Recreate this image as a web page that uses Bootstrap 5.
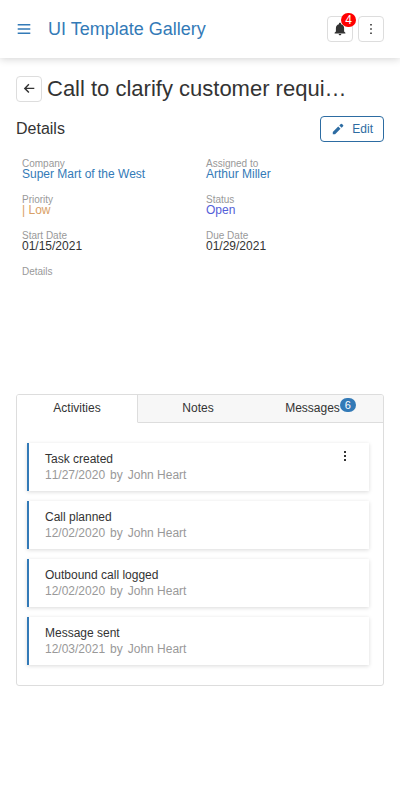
<!DOCTYPE html>
<html lang="en">
<head>
<meta charset="utf-8">
<meta name="viewport" content="width=device-width, initial-scale=1">
<title>UI Template Gallery</title>
<link href="https://cdn.jsdelivr.net/npm/bootstrap@5.3.0/dist/css/bootstrap.min.css" rel="stylesheet">
<style>
:root { --brand: #337ab7; --ink: #333; --muted: #999; --line: #ddd; }
body { font-family: "Liberation Sans", Arial, sans-serif; font-size: 12px; line-height: 16px; color: var(--ink); }
svg { display: block; fill: currentColor; }
a { color: var(--brand); text-decoration: none; }
.app-bar { height: 58px; box-shadow: 0 1px 8px rgba(0,0,0,.18); }
.app-title { font-size: 18px; line-height: 24px; color: var(--brand); }
.menu-btn { width: 16px; height: 16px; color: var(--brand); }
.tools { gap: 5px; }
.tool-btn { width: 26px; height: 26px; border: 1px solid var(--line); border-radius: 4px; background: #fff; color: var(--ink); flex: none; }
.bell-count { top: -4px; right: -4px; width: 15px; height: 14px; border-radius: 7px; background: red; color: #fff; line-height: 14px; }
.page-body { padding-top: 18px; }
.title-row { gap: 5px; margin-bottom: 14px; }
.page-title { font-size: 22px; line-height: 26px; }
.section-title { font-size: 16px; line-height: 24px; }
.edit-btn { width: 64px; height: 26px; padding: 0 10px; border: 1px solid #2d6ca2; border-radius: 4px; background: #fff; color: #2d6ca2; }
.fields { padding-top: 16px; min-height: 252px; }
.field { height: 36px; padding: 0 6px; }
.field dt { font-size: 10px; line-height: 12px; font-weight: 400; color: var(--muted); }
.field dd { line-height: 8px; }
.low { color: #d9a066; }
.open { color: #5360d8; }
.panel { border: 1px solid var(--line); border-radius: 3px; }
.tab-strip { display: grid; grid-template-columns: 121fr 120fr 125fr; }
.tab-btn { height: 28px; border: 0; border-bottom: 1px solid var(--line); background: #f7f7f7; color: var(--ink); padding: 0 0 2px; }
.tab-btn.active { background: #fff; border-bottom-color: #fff; border-right: 1px solid var(--line); }
.msg-count { left: 100%; top: -3px; width: 16px; height: 14px; border-radius: 7px; background: var(--brand); color: #fff; font-size: 11px; line-height: 14px; }
.feed { display: grid; gap: 10px; padding: 20px 14px 20px 10px; }
.entry { height: 48px; padding: 8px 16px; border-left: 2px solid var(--brand); box-shadow: 0 1px 4px rgba(0,0,0,.15); }
.entry-meta { color: var(--muted); gap: 5px; font-kerning: none; }
.more-btn { width: 16px; height: 16px; color: var(--ink); }
</style>
</head>
<body>
<header class="app-bar d-flex align-items-center px-3">
  <button class="menu-btn btn p-0 border-0" type="button" aria-label="Menu"><svg width="16" height="16" viewBox="0 0 16 16"><path d="M1.700 3h12.600v1.500H1.700zM1.700 7.200h12.600v1.500H1.700zM1.700 11.400h12.600v1.500H1.700z"/></svg></button>
  <span class="app-title ms-3 me-auto">UI Template Gallery</span>
  <div class="tools d-flex">
    <button class="tool-btn position-relative d-flex align-items-center justify-content-center p-0" type="button" aria-label="Notifications">
      <svg width="14" height="14" viewBox="0 0 14 14"><path d="M7 .8c.7 0 1.100.5 1.100 1.100v.3c2 .5 3 2 3 4V9.500l1.300 1.200v.8H1.600v-.8L2.900 9.500V6.200c0-2 1-3.500 3-4v-.3C5.900 1.300 6.300.8 7 .8zM5.700 12h2.600c0 .8-.5 1.300-1.300 1.300S5.700 12.800 5.700 12z"/></svg>
      <span class="bell-count position-absolute text-center">4</span>
    </button>
    <button class="tool-btn d-flex align-items-center justify-content-center p-0" type="button" aria-label="More"><svg width="14" height="14" viewBox="0 0 14 14"><path d="M6.200 2h1.600v1.600H6.200zM6.200 6.200h1.600v1.600H6.200zM6.200 10.400h1.600V12H6.200z"/></svg></button>
  </div>
</header>

<main class="page-body px-3">
  <div class="title-row d-flex align-items-center">
    <button class="tool-btn d-flex align-items-center justify-content-center p-0" type="button" aria-label="Back"><svg width="14" height="14" viewBox="0 0 14 14"><path d="M12.300 5.700H4.500l2.900-2.900-1-1L1.800 6.400l4.600 4.600 1-1-2.900-2.900h7.800z"/></svg></button>
    <h1 class="page-title text-truncate mb-0 fw-normal">Call to clarify customer requi…</h1>
  </div>
  <div class="d-flex align-items-center justify-content-between">
    <h2 class="section-title mb-0 fw-normal">Details</h2>
    <button class="edit-btn d-flex align-items-center justify-content-between" type="button"><svg width="14" height="14" viewBox="0 0 14 14"><path d="M1.800 9.900 7.200 4.500l2.300 2.300-5.400 5.400H1.800zM8.300 3.400l1.500-1.500q.6-.5 1.100 0l1.200 1.200q.5.5 0 1.100l-1.500 1.500z"/></svg>Edit</button>
  </div>

  <dl class="fields row g-0 align-content-start mb-0">
    <div class="field col-6"><dt>Company</dt><dd><a href="#">Super Mart of the West</a></dd></div>
    <div class="field col-6"><dt>Assigned to</dt><dd><a href="#">Arthur Miller</a></dd></div>
    <div class="field col-6"><dt>Priority</dt><dd class="low">| Low</dd></div>
    <div class="field col-6"><dt>Status</dt><dd class="open">Open</dd></div>
    <div class="field col-6"><dt>Start Date</dt><dd>01/15/2021</dd></div>
    <div class="field col-6"><dt>Due Date</dt><dd>01/29/2021</dd></div>
    <div class="field col-12"><dt>Details</dt><dd></dd></div>
  </dl>

  <section class="panel overflow-hidden">
    <div class="tab-strip" role="tablist">
      <button class="tab-btn active" type="button" role="tab" aria-selected="true">Activities</button>
      <button class="tab-btn" type="button" role="tab" aria-selected="false">Notes</button>
      <button class="tab-btn pe-3" type="button" role="tab" aria-selected="false"><span class="position-relative">Messages<span class="msg-count position-absolute text-center">6</span></span></button>
    </div>
    <div class="feed" role="tabpanel">
      <article class="entry d-flex justify-content-between">
        <div><div>Task created</div><div class="entry-meta d-flex"><span>11/27/2020</span><span>by</span><span>John Heart</span></div></div>
        <button class="more-btn btn p-0 border-0" type="button" aria-label="Activity actions"><svg width="16" height="16" viewBox="0 0 16 16"><path d="M7 0h2v2H7zM7 4h2v2H7zM7 8h2v2H7z"/></svg></button>
      </article>
      <article class="entry"><div>Call planned</div><div class="entry-meta d-flex"><span>12/02/2020</span><span>by</span><span>John Heart</span></div></article>
      <article class="entry"><div>Outbound call logged</div><div class="entry-meta d-flex"><span>12/02/2020</span><span>by</span><span>John Heart</span></div></article>
      <article class="entry"><div>Message sent</div><div class="entry-meta d-flex"><span>12/03/2021</span><span>by</span><span>John Heart</span></div></article>
    </div>
  </section>
</main>
<script src="https://cdn.jsdelivr.net/npm/bootstrap@5.3.0/dist/js/bootstrap.bundle.min.js"></script>
</body>
</html>
